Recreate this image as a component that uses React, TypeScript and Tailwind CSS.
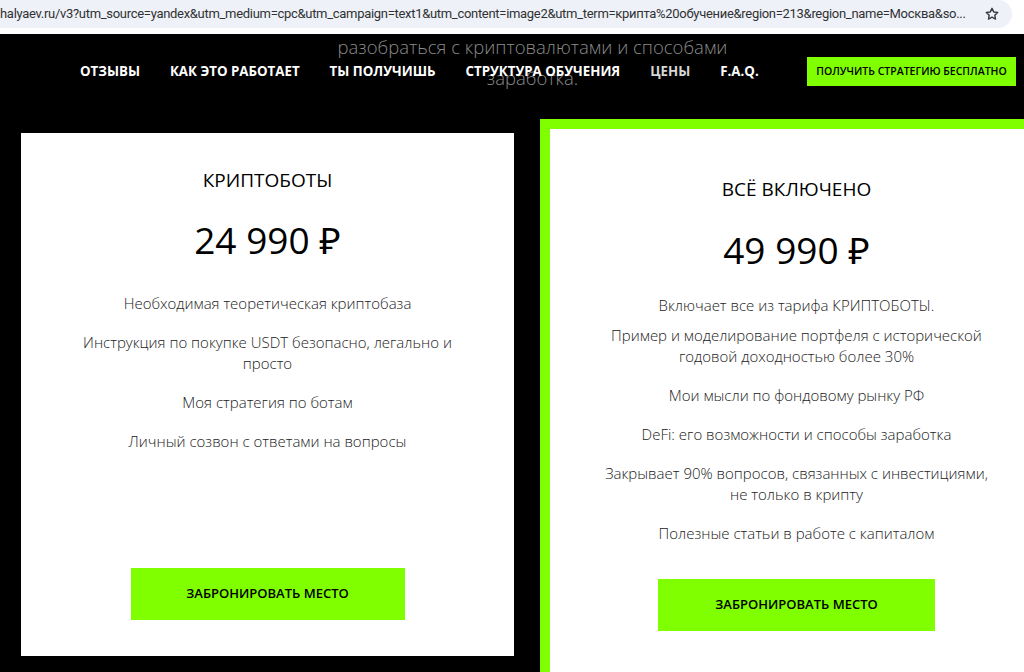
import React from "react";

const font = { fontFamily: '"Open Sans", "Noto Sans", "DejaVu Sans", sans-serif' };

const navItems = ["ОТЗЫВЫ", "КАК ЭТО РАБОТАЕТ", "ТЫ ПОЛУЧИШЬ", "СТРУКТУРА ОБУЧЕНИЯ", "ЦЕНЫ", "F.A.Q."];

function Star() {
  return (
    <svg width="16" height="16" viewBox="0 0 24 24" fill="none" stroke="#3c4043" strokeWidth="2.2" strokeLinejoin="round">
      <path d="M12 3.5l2.6 5.4 5.9.8-4.3 4.1 1 5.8L12 16.8l-5.2 2.8 1-5.8-4.3-4.1 5.9-.8z" />
    </svg>
  );
}

function Feature({ children }: { children: React.ReactNode }) {
  return <p className="text-[15px] leading-[21px] font-light text-[#222] text-center">{children}</p>;
}

export default function App() {
  return (
    <div className="w-[1024px] h-[672px] overflow-hidden bg-black relative" style={font}>
      {/* browser url bar */}
      <div className="h-[34px] bg-white">
        <div className="h-[28px] w-[1012px] bg-[#eef1f7] rounded-r-full flex items-center justify-between pr-[12px]">
          <span className="text-[13px] text-[#303134] whitespace-nowrap tracking-[-0.3px]" style={{ fontFamily: '"Roboto", "Liberation Sans", sans-serif' }}>
            halyaev.ru/v3?utm_source=yandex&amp;utm_medium=cpc&amp;utm_campaign=text1&amp;utm_content=image2&amp;utm_term=крипта%20обучение&amp;region=213&amp;region_name=Москва&amp;so...
          </span>
          <Star />
        </div>
      </div>

      {/* overlay background text */}
      <div className="absolute left-[325px] top-[31px] w-[415px] text-[18.5px] leading-[31px] font-light text-[#8a8a8a] text-center whitespace-nowrap">
        <div>разобраться с криптовалютами и способами</div>
        <div>заработка.</div>
      </div>

      {/* nav */}
      <div className="relative h-[85px] flex items-center pl-[80px] pb-[10px]">
        <div className="flex items-center gap-[30px]">
          {navItems.map((n) => (
            <span key={n} className={`text-[13.3px] font-bold whitespace-nowrap ${n === "ЦЕНЫ" ? "text-[#d6d6d6]" : "text-white"}`}>
              {n}
            </span>
          ))}
        </div>
        <div className="ml-auto mr-[8px] w-[209px] h-[29px] bg-[#7fff00] flex items-center justify-center">
          <span className="text-[10.5px] font-semibold text-black whitespace-nowrap">ПОЛУЧИТЬ СТРАТЕГИЮ БЕСПЛАТНО</span>
        </div>
      </div>

      {/* cards */}
      <div className="flex items-start">
        <div className="shrink-0 ml-[21px] mt-[14px] w-[493px] h-[523px] bg-white flex flex-col items-center pt-[36px] pb-[36px]">
          <h3 className="text-[19px] leading-[22px] font-medium text-black">КРИПТОБОТЫ</h3>
          <div className="mt-[27px] text-[37px] leading-[44px] text-black">24 990 ₽</div>
          <div className="mt-[31px] w-[400px] flex flex-col gap-[18px]">
            <Feature>Необходимая теоретическая криптобаза</Feature>
            <Feature>Инструкция по покупке USDT безопасно, легально и просто</Feature>
            <Feature>Моя стратегия по ботам</Feature>
            <Feature>Личный созвон с ответами на вопросы</Feature>
          </div>
          <div className="mt-auto w-[274px] h-[52px] bg-[#7fff00] flex items-center justify-center">
            <span className="text-[13px] font-semibold text-black">ЗАБРОНИРОВАТЬ МЕСТО</span>
          </div>
        </div>

        <div className="ml-[26px] shrink-0 w-[513px] h-[600px] border-[10px] border-[#7fff00] bg-white flex flex-col items-center pt-[49px]">
          <h3 className="text-[19px] leading-[22px] font-medium text-black">ВСЁ ВКЛЮЧЕНО</h3>
          <div className="mt-[28px] text-[37px] leading-[44px] text-black">49 990 ₽</div>
          <div className="mt-[23px] w-[395px] flex flex-col">
            <Feature>Включает все из тарифа КРИПТОБОТЫ.</Feature>
            <div className="mt-[9px] flex flex-col gap-[18px]">
              <Feature>Пример и моделирование портфеля с исторической годовой доходностью более 30%</Feature>
              <Feature>Мои мысли по фондовому рынку РФ</Feature>
              <Feature>DeFi: его возможности и способы заработка</Feature>
              <Feature>Закрывает 90% вопросов, связанных с инвестициями, не только в крипту</Feature>
              <Feature>Полезные статьи в работе с капиталом</Feature>
            </div>
          </div>
          <div className="mt-[35px] w-[277px] h-[52px] bg-[#7fff00] flex items-center justify-center">
            <span className="text-[13px] font-semibold text-black">ЗАБРОНИРОВАТЬ МЕСТО</span>
          </div>
        </div>
      </div>
    </div>
  );
}
